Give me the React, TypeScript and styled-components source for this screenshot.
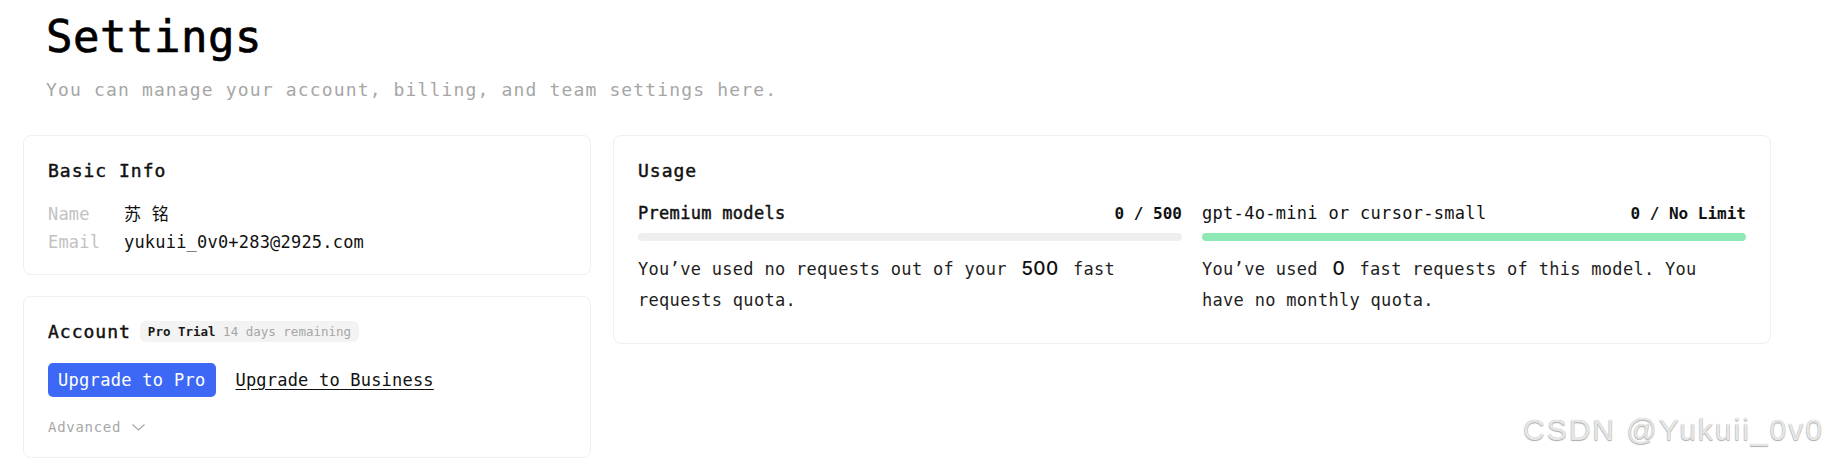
import React from "react";
import styled, { createGlobalStyle } from "styled-components";

const mono = `"DejaVu Sans Mono", "Noto Sans CJK SC", monospace`;

const GlobalStyle = createGlobalStyle`
  body {
    margin: 0;
    background: #ffffff;
    font-family: ${mono};
    color: #111;
  }
`;

const Page = styled.div`
  position: relative;
  width: 1748px;
  padding: 9px 0 0 23px;
`;

const Header = styled.header`
  padding-left: 23px;
`;

const Title = styled.h1`
  margin: 0;
  font-size: 44px;
  line-height: 56px;
  font-weight: 400;
  letter-spacing: 0.5px;
  color: #000;
  -webkit-text-stroke: 0.7px #000;
`;

const Subtitle = styled.p`
  margin: 13px 0 0;
  font-size: 18px;
  line-height: 24px;
  letter-spacing: 1.15px;
  color: #a6a6a6;
`;

const Grid = styled.div`
  margin-top: 33px;
  display: grid;
  grid-template-columns: 568px 1158px;
  column-gap: 22px;
  align-items: start;
`;

const Column = styled.div`
  display: flex;
  flex-direction: column;
  gap: 21px;
`;

const Card = styled.section<{ $pb: number }>`
  border: 1px solid #efefef;
  border-radius: 8px;
  padding: 24px 24px ${(p) => p.$pb}px;
  background: #fff;
`;

const CardTitle = styled.h2`
  margin: 0;
  font-size: 18px;
  line-height: 21px;
  letter-spacing: 1px;
  font-weight: 400;
  color: #111;
  -webkit-text-stroke: 0.45px #111;
`;

const InfoList = styled.dl`
  margin: 19px 0 0;
  display: grid;
  grid-template-columns: 76px 1fr;
  font-size: 17px;
  line-height: 28px;
  letter-spacing: 0.2px;
`;

const Label = styled.dt`
  color: #c2c2c2;
`;

const Value = styled.dd`
  margin: 0;
  color: #111;
`;

const AccountHead = styled.div`
  display: flex;
  align-items: center;
  gap: 9px;
`;

const Badge = styled.span`
  display: inline-flex;
  align-items: center;
  height: 21px;
  padding: 0 8px;
  border-radius: 6px;
  background: #f3f3f3;
  font-size: 12.5px;
  white-space: pre;
  color: #a6a6a6;

  b {
    color: #1a1a1a;
    font-weight: 600;
  }
`;

const Actions = styled.div`
  margin-top: 21px;
  display: flex;
  align-items: center;
  gap: 20px;
`;

const PrimaryButton = styled.button`
  height: 34px;
  padding: 0 10px;
  border: none;
  border-radius: 5px;
  background: #3d68f6;
  color: #fff;
  font-family: ${mono};
  font-size: 17px;
  letter-spacing: 0.3px;
`;

const TextLink = styled.a`
  color: #111;
  font-size: 17px;
  letter-spacing: 0.2px;
  text-decoration: underline;
  text-underline-offset: 3px;
`;

const Advanced = styled.div`
  margin-top: 22px;
  display: flex;
  align-items: center;
  gap: 11px;
  font-size: 14px;
  line-height: 17px;
  letter-spacing: 0.7px;
  color: #a8a8a8;
`;

const Meters = styled.div`
  margin-top: 20px;
  display: grid;
  grid-template-columns: 1fr 1fr;
  column-gap: 20px;
`;

const MeterHead = styled.div<{ $strong?: boolean }>`
  display: flex;
  justify-content: space-between;
  align-items: baseline;
  font-size: 17px;
  line-height: 24px;
  letter-spacing: 0.3px;
  color: #111;
  -webkit-text-stroke: ${(p) => (p.$strong ? "0.45px #111" : "0")};
`;

const Count = styled.span`
  font-size: 16px;
  font-weight: 700;
  letter-spacing: 0;
  -webkit-text-stroke: 0;
`;

const Bar = styled.div<{ $color: string }>`
  margin-top: 7px;
  height: 8px;
  border-radius: 4px;
  background: ${(p) => p.$color};
`;

const MeterText = styled.p`
  margin: 13px 0 0;
  font-size: 17px;
  line-height: 31px;
  letter-spacing: 0.3px;
  color: #1e1e1e;
`;

const Big = styled.span`
  display: inline-block;
  font-family: Inter, "Noto Sans", sans-serif;
  font-size: 19px;
  font-weight: 500;
  line-height: 20px;
  margin: 0 4px;
  color: #111;
`;

const Watermark = styled.div`
  position: absolute;
  left: 1523px;
  top: 413px;
  font-family: "Liberation Sans", Arial, sans-serif;
  font-size: 30px;
  letter-spacing: 2px;
  white-space: nowrap;
  color: #e6e6e6;
  text-shadow: 0 1px 1px rgba(0, 0, 0, 0.3), 0 0 1px rgba(0, 0, 0, 0.25);
`;

const Chevron = () => (
  <svg width="13" height="7" viewBox="0 0 13 7" fill="none">
    <path d="M0.5 0.5 L6.5 6 L12.5 0.5" stroke="#a8a8a8" strokeWidth="1.2" />
  </svg>
);

export default function App() {
  return (
    <Page>
      <GlobalStyle />
      <Header>
        <Title>Settings</Title>
        <Subtitle>You can manage your account, billing, and team settings here.</Subtitle>
      </Header>
      <Grid>
        <Column>
          <Card $pb={18}>
            <CardTitle>Basic Info</CardTitle>
            <InfoList>
              <Label>Name</Label>
              <Value>苏 铭</Value>
              <Label>Email</Label>
              <Value>yukuii_0v0+283@2925.com</Value>
            </InfoList>
          </Card>
          <Card $pb={21}>
            <AccountHead>
              <CardTitle>Account</CardTitle>
              <Badge>
                <b>Pro Trial</b> 14 days remaining
              </Badge>
            </AccountHead>
            <Actions>
              <PrimaryButton>Upgrade to Pro</PrimaryButton>
              <TextLink href="#">Upgrade to Business</TextLink>
            </Actions>
            <Advanced>
              Advanced <Chevron />
            </Advanced>
          </Card>
        </Column>
        <Card $pb={27}>
          <CardTitle>Usage</CardTitle>
          <Meters>
            <div>
              <MeterHead $strong>
                <span>Premium models</span>
                <Count>0 / 500</Count>
              </MeterHead>
              <Bar $color="#eeeeee" />
              <MeterText>
                You’ve used no requests out of your <Big>500</Big> fast requests quota.
              </MeterText>
            </div>
            <div>
              <MeterHead>
                <span>gpt-4o-mini or cursor-small</span>
                <Count>0 / No Limit</Count>
              </MeterHead>
              <Bar $color="#8fe9b4" />
              <MeterText>
                You’ve used <Big>0</Big> fast requests of this model. You have no monthly quota.
              </MeterText>
            </div>
          </Meters>
        </Card>
      </Grid>
      <Watermark>CSDN @Yukuii_0v0</Watermark>
    </Page>
  );
}
